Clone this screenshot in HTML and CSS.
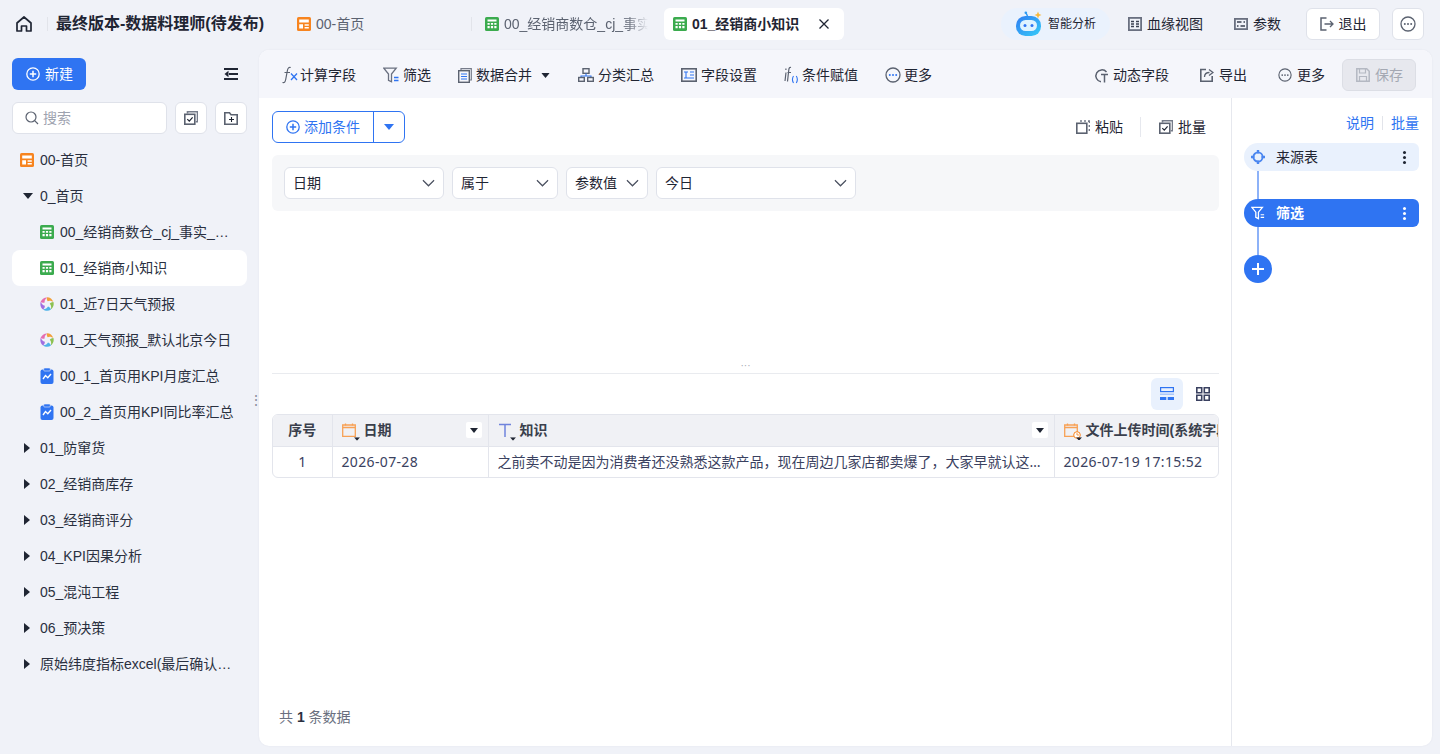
FILE: index.html
```html
<!DOCTYPE html>
<html lang="zh-CN">
<head>
<meta charset="utf-8">
<title>最终版本-数据料理师(待发布)</title>
<link rel="stylesheet" href="styles.css">
</head>
<body>
<svg class="defs" width="0" height="0">
  <defs>
    <linearGradient id="g-bot" x1="0" y1="0" x2="1" y2="1"><stop offset="0" stop-color="#2f7cf2"/><stop offset="1" stop-color="#36cdf8"/></linearGradient>
    <symbol id="i-sheet" viewBox="0 0 14 14"><rect width="14" height="14" rx="1.6" fill="#3bab4e"/><rect x="2.500" y="2.500" width="9" height="2" fill="#fff"/><path d="M2.500 6h2.200v1.800H2.500zM5.900 6h2.200v1.800H5.900zM9.300 6h2.200v1.800H9.300zM2.500 9h2.200v2.200H2.500zM5.900 9h2.200v2.200H5.900zM9.300 9h2.200v2.200H9.300z" fill="#fff"/></symbol>
    <symbol id="i-dash" viewBox="0 0 14 14"><rect width="14" height="14" rx="1.6" fill="#f7841f"/><path d="M2.200 2.500h9.600v3H2.200zM2.200 7.200h3.800v4.300H2.200zM7.600 7.200h4.200v1.600H7.600zM7.600 10h4.200v1.500H7.600z" fill="#fff"/></symbol>
    <symbol id="i-swirl" viewBox="0 0 14 14">
      <path d="M7 .3C10 .3 12.500 2.200 13.400 5.300C11.800 3.800 9.500 3.300 7.700 4.300C6.800 3 6.500 1.500 7 .3z" fill="#f2a03a"/>
      <path d="M7 .3C10 .3 12.500 2.200 13.400 5.300C11.800 3.800 9.500 3.300 7.700 4.300C6.800 3 6.500 1.500 7 .3z" fill="#8cc152" transform="rotate(72 7 7)"/>
      <path d="M7 .3C10 .3 12.500 2.200 13.400 5.300C11.800 3.800 9.500 3.300 7.700 4.300C6.800 3 6.500 1.500 7 .3z" fill="#4fb3e8" transform="rotate(144 7 7)"/>
      <path d="M7 .3C10 .3 12.500 2.200 13.400 5.300C11.800 3.800 9.500 3.300 7.700 4.300C6.800 3 6.500 1.500 7 .3z" fill="#a06fe0" transform="rotate(216 7 7)"/>
      <path d="M7 .3C10 .3 12.500 2.200 13.400 5.300C11.800 3.800 9.500 3.300 7.700 4.300C6.800 3 6.500 1.500 7 .3z" fill="#e56db1" transform="rotate(288 7 7)"/>
    </symbol>
    <symbol id="i-kpi" viewBox="0 0 13 16"><rect y="1.500" width="13" height="14.500" rx="2" fill="#2f74f2"/><rect x="3.200" width="6.600" height="3" rx="1" fill="#2f74f2" stroke="#f0f2f8" stroke-width=".6"/><path d="M2.500 11l2.500-3.500 2.300 2.300 3.200-3.800" fill="none" stroke="#fff" stroke-width="1.400"/></symbol>
    <symbol id="i-more" viewBox="0 0 16 16"><circle cx="8" cy="8" r="7" fill="none" stroke="#5b6270" stroke-width="1.300"/><circle cx="4.800" cy="8" r="1" fill="#5b6270"/><circle cx="8" cy="8" r="1" fill="#5b6270"/><circle cx="11.200" cy="8" r="1" fill="#5b6270"/></symbol>
    <symbol id="i-morebl" viewBox="0 0 16 16"><circle cx="8" cy="8" r="7" fill="none" stroke="#5b6270" stroke-width="1.300"/><circle cx="4.800" cy="8" r="1" fill="#2f74f2"/><circle cx="8" cy="8" r="1" fill="#2f74f2"/><circle cx="11.200" cy="8" r="1" fill="#2f74f2"/></symbol>
    <symbol id="i-batch" viewBox="0 0 14 14"><path d="M3.500 2.500V.8h10v10h-1.700" fill="none" stroke="#767c8a" stroke-width="1.600"/><rect x=".8" y="3.300" width="10" height="9.900" fill="none" stroke="#5b6270" stroke-width="1.600"/><path d="M3.300 8.200l2 2 3.300-3.800" fill="none" stroke="#1f2533" stroke-width="1.200"/></symbol>
    <symbol id="i-filter" viewBox="0 0 16 16"><path d="M.8 1.200h12.400L8.500 7v7.800l-3-1.500V7z" fill="none" stroke="#6a7080" stroke-width="1.300"/><path d="M11 10.500h4.500M11 13.500h4.500" stroke="#2f74f2" stroke-width="1.300"/></symbol>
    <symbol id="i-caret" viewBox="0 0 10 6"><path d="M0 0h10L5 6z" fill="currentColor"/></symbol>
    <symbol id="i-chev" viewBox="0 0 14 8"><path d="M1 1l6 6 6-6" fill="none" stroke="#4b5160" stroke-width="1.300"/></symbol>
    <symbol id="i-plus" viewBox="0 0 14 14"><circle cx="7" cy="7" r="6.200" fill="none" stroke="currentColor" stroke-width="1.300"/><path d="M7 3.800v6.400M3.800 7h6.400" stroke="currentColor" stroke-width="1.500"/></symbol>
    <symbol id="i-cal" viewBox="0 0 14 14"><path d="M.7 2h12.600v11.300H.7z" fill="none" stroke="#f7a155" stroke-width="1.300"/><path d="M.7 4.500h12.600M3.500.5v2M10.500.5v2" stroke="#f7a155" stroke-width="1.300"/></symbol>
  </defs>
</svg>

<header class="topbar">
  <svg class="ic-home" width="16" height="16" viewBox="0 0 16 16"><path d="M1 7L8 1l7 6v8h-4.500v-5h-5v5H1z" fill="none" stroke="#1f2533" stroke-width="1.700" stroke-linejoin="round"/></svg>
  <span class="vbar vbar-title"></span>
  <h1 class="title">最终版本-数据料理师(待发布)</h1>
  <div class="tab tab-first"><svg class="ic14"><use href="#i-dash"/></svg><span>00-首页</span></div>
  <span class="vbar vbar-tab"></span>
  <div class="tab tab-second"><svg class="ic14"><use href="#i-sheet"/></svg><span class="tab-fade">00_经销商数仓_cj_事实表</span></div>
  <div class="tab tab-active"><svg class="ic14"><use href="#i-sheet"/></svg><span class="tab-name">01_经销商小知识</span>
    <svg class="tab-x" width="10" height="10" viewBox="0 0 10 10"><path d="M.5.5l9 9M9.500.5l-9 9" stroke="#1f2533" stroke-width="1.300"/></svg></div>
  <div class="top-right">
    <div class="ai-pill">
      <svg width="27" height="27" viewBox="0 0 27 27"><path d="M12.500 6L11 3" stroke="#2f9bf2" stroke-width="1.500"/><circle cx="10.800" cy="2.800" r="1.300" fill="#2f9bf2"/><path d="M23 1.500l1 2.500 2.500 1-2.500 1-1 2.500-1-2.500-2.500-1 2.500-1z" fill="#f8b83a"/><rect x="1" y="6" width="25" height="20" rx="9.500" fill="url(#g-bot)"/><rect x="5" y="10" width="17" height="11" rx="5.500" fill="#dff3ff"/><circle cx="10" cy="15.500" r="1.500" fill="#2f74f2"/><circle cx="17" cy="15.500" r="1.500" fill="#2f74f2"/></svg>
      <span>智能分析</span>
    </div>
    <div class="top-link top-link-lineage"><svg width="14" height="14" viewBox="0 0 14 14"><rect x=".9" y=".9" width="12.200" height="12.200" fill="none" stroke="#6a7080" stroke-width="1.800"/><path d="M3 4.500h3M3 9.500h3M8 4.500h3M8 7h3M8 9.500h3M6 7H3" stroke="#3a4050" stroke-width="1.300"/></svg><span>血缘视图</span></div>
    <div class="top-link top-link-param"><svg width="14" height="14" viewBox="0 0 14 14"><rect x=".9" y="1.900" width="12.200" height="10.200" fill="none" stroke="#6a7080" stroke-width="1.800"/><path d="M3 5h4.500M9.500 5H11M3 9h1.500M6.500 9H11" stroke="#3a4050" stroke-width="1.300"/></svg><span>参数</span></div>
    <button class="btn-out"><svg width="14" height="14" viewBox="0 0 14 14"><path d="M6.500 1H1v12h5.500" fill="none" stroke="#5b6270" stroke-width="1.500"/><path d="M4.500 7h8.500M10 4l3 3-3 3" fill="none" stroke="#5b6270" stroke-width="1.300"/></svg><span>退出</span></button>
    <button class="btn-circle"><svg width="16" height="16"><use href="#i-more"/></svg></button>
  </div>
</header>

<div class="workspace">
  <aside class="sidebar">
    <div class="side-head">
      <button class="btn-new"><svg class="ic14"><use href="#i-plus"/></svg><span>新建</span></button>
      <svg class="collapse" width="14" height="12" viewBox="0 0 14 12"><path d="M0 1h14M5 6h9M0 11h14" stroke="#1f2533" stroke-width="1.800"/><path d="M4.500 2.800v6.400L.5 6z" fill="#1f2533"/></svg>
    </div>
    <div class="side-search">
      <div class="search-box"><svg width="14" height="14" viewBox="0 0 14 14"><circle cx="6" cy="6" r="5" fill="none" stroke="#5b6270" stroke-width="1.200"/><path d="M9.700 9.700L13 13" stroke="#5b6270" stroke-width="1.200"/></svg><span>搜索</span></div>
      <button class="icon-btn"><svg class="ic14"><use href="#i-batch"/></svg></button>
      <button class="icon-btn"><svg width="14" height="13" viewBox="0 0 14 13"><path d="M.8 12.200V.8h4.700l1.500 2h6.200v9.400z" fill="none" stroke="#5b6270" stroke-width="1.600"/><path d="M7.500 5v5M5 7.500h5" stroke="#1f2533" stroke-width="1.100"/></svg></button>
    </div>
    <ul class="tree">
      <li class="node lv1"><svg class="ic14"><use href="#i-dash"/></svg><span class="label">00-首页</span></li>
      <li class="node lv1"><svg class="arrow arrow-d" viewBox="0 0 10 6"><use href="#i-caret"/></svg><span class="label">0_首页</span></li>
      <li class="node lv2"><svg class="ic14"><use href="#i-sheet"/></svg><span class="label label-limit">00_经销商数仓_cj_事实_明细数据表</span></li>
      <li class="node lv2 active"><svg class="ic14"><use href="#i-sheet"/></svg><span class="label">01_经销商小知识</span></li>
      <li class="node lv2"><svg class="ic14"><use href="#i-swirl"/></svg><span class="label">01_近7日天气预报</span></li>
      <li class="node lv2"><svg class="ic14"><use href="#i-swirl"/></svg><span class="label">01_天气预报_默认北京今日</span></li>
      <li class="node lv2"><svg class="ic-kpi"><use href="#i-kpi"/></svg><span class="label">00_1_首页用KPI月度汇总</span></li>
      <li class="node lv2"><svg class="ic-kpi"><use href="#i-kpi"/></svg><span class="label">00_2_首页用KPI同比率汇总</span></li>
      <li class="node lv1"><svg class="arrow arrow-r" viewBox="0 0 10 6"><use href="#i-caret"/></svg><span class="label">01_防窜货</span></li>
      <li class="node lv1"><svg class="arrow arrow-r" viewBox="0 0 10 6"><use href="#i-caret"/></svg><span class="label">02_经销商库存</span></li>
      <li class="node lv1"><svg class="arrow arrow-r" viewBox="0 0 10 6"><use href="#i-caret"/></svg><span class="label">03_经销商评分</span></li>
      <li class="node lv1"><svg class="arrow arrow-r" viewBox="0 0 10 6"><use href="#i-caret"/></svg><span class="label">04_KPI因果分析</span></li>
      <li class="node lv1"><svg class="arrow arrow-r" viewBox="0 0 10 6"><use href="#i-caret"/></svg><span class="label">05_混沌工程</span></li>
      <li class="node lv1"><svg class="arrow arrow-r" viewBox="0 0 10 6"><use href="#i-caret"/></svg><span class="label">06_预决策</span></li>
      <li class="node lv1"><svg class="arrow arrow-r" viewBox="0 0 10 6"><use href="#i-caret"/></svg><span class="label">原始纬度指标excel(最后确认版本数据)</span></li>
    </ul>
    <span class="grip">⋮</span>
  </aside>

  <main class="card">
    <div class="toolbar">
      <div class="tool tool-fx"><svg width="16" height="18" viewBox="0 0 16 18"><path d="M.5 16.500c2 .5 2.700-.5 3.200-3l1.700-9c.5-2.500 1.500-3.500 3.300-3M2.500 6.500H8" fill="none" stroke="#5b6270" stroke-width="1.200"/><path d="M9 7.500l6 6.500M15 7.500l-6 6.500" stroke="#2f74f2" stroke-width="1.300"/></svg><span>计算字段</span></div>
      <div class="tool"><svg width="16" height="16"><use href="#i-filter"/></svg><span>筛选</span></div>
      <div class="tool tool-merge"><svg width="14" height="15" viewBox="0 0 14 15"><path d="M3 2V.7h10.300V12H12" fill="none" stroke="#767c8a" stroke-width="1.200"/><rect x=".7" y="2.700" width="10.600" height="11.600" fill="none" stroke="#5b6270" stroke-width="1.400"/><path d="M3 6h6M3 8.500h6M3 11h6" stroke="#2f74f2" stroke-width="1.100"/></svg><span>数据合并</span><svg class="tool-caret" viewBox="0 0 10 6"><use href="#i-caret"/></svg></div>
      <div class="tool"><svg width="16" height="14" viewBox="0 0 16 14"><rect x="5" y=".7" width="6" height="4.600" fill="none" stroke="#5b6270" stroke-width="1.400"/><path d="M8 5.500V8M3 10V8h10v2" fill="none" stroke="#2f74f2" stroke-width="1.100"/><rect x=".7" y="9.500" width="5.600" height="3.800" fill="none" stroke="#5b6270" stroke-width="1.400"/><rect x="9.700" y="9.500" width="5.600" height="3.800" fill="none" stroke="#5b6270" stroke-width="1.400"/></svg><span>分类汇总</span></div>
      <div class="tool"><svg width="16" height="14" viewBox="0 0 16 14"><rect x=".8" y=".8" width="14.400" height="12.400" fill="none" stroke="#5b6270" stroke-width="1.600"/><path d="M3 4h4M5 4v6M9 4h4M9 7h4M3 10h10" stroke="#2f74f2" stroke-width="1.100"/></svg><span>字段设置</span></div>
      <div class="tool"><svg width="14" height="18" viewBox="0 0 14 18"><path d="M2 6.500L1 15M1.900 2.500v1.500M7 1.500C5.500 1 5 2 4.700 4.500l-1.200 11M3.500 6.500H7" fill="none" stroke="#5b6270" stroke-width="1.200"/><path d="M9.500 10c-1.200 2-1.200 5 0 7M12.300 10c1.200 2 1.200 5 0 7" fill="none" stroke="#2f74f2" stroke-width="1.100"/></svg><span>条件赋值</span></div>
      <div class="tool tool-more"><svg width="16" height="16"><use href="#i-morebl"/></svg><span>更多</span></div>
      <div class="tool-right">
        <div class="tool"><svg width="14" height="15" viewBox="0 0 14 15"><path d="M12.500 4A6 6 0 1 0 7 13.800" fill="none" stroke="#5b6270" stroke-width="1.500"/><path d="M7 6.500h7M10.500 6.500v8" stroke="#5b6270" stroke-width="1.500"/></svg><span>动态字段</span></div>
        <div class="tool"><svg width="14" height="14" viewBox="0 0 14 14"><path d="M6 1.500H.8v11.700h11.400V8" fill="none" stroke="#5b6270" stroke-width="1.600"/><path d="M4.500 9c0-3 2-4.500 5-4.500M9 1.500L13 4.500 9 7.500" fill="none" stroke="#5b6270" stroke-width="1.300"/></svg><span>导出</span></div>
        <div class="tool"><svg width="14" height="14"><use href="#i-more"/></svg><span>更多</span></div>
        <button class="btn-save"><svg width="14" height="14" viewBox="0 0 14 14"><path d="M.8.800h9.900l2.500 2.500v9.900H.8z" fill="none" stroke="#b4b8c2" stroke-width="1.500"/><path d="M3.500 1v4h6V1M3.500 13V8.500h7V13" fill="none" stroke="#b4b8c2" stroke-width="1.200"/></svg><span>保存</span></button>
      </div>
    </div>

    <div class="body">
      <section class="editor">
        <div class="cond-row">
          <div class="split-btn">
            <div class="split-main"><svg class="ic14"><use href="#i-plus"/></svg><span>添加条件</span></div>
            <div class="split-drop"><svg class="split-caret" viewBox="0 0 10 6"><use href="#i-caret"/></svg></div>
          </div>
          <div class="cond-actions">
            <div class="cond-act"><svg width="14" height="14" viewBox="0 0 14 14"><rect x=".8" y="3.300" width="10" height="9.900" fill="none" stroke="#5b6270" stroke-width="1.600"/><path d="M4 1h2M8 1h2M12 1h1.500v2M13.300 5v2M13.300 9v2" stroke="#767c8a" stroke-width="1.400"/></svg><span>粘贴</span></div>
            <span class="cond-sep"></span>
            <div class="cond-act"><svg class="ic14"><use href="#i-batch"/></svg><span>批量</span></div>
          </div>
        </div>
        <div class="filter-box">
          <div class="sel sel-a"><span>日期</span><svg class="chev"><use href="#i-chev"/></svg></div>
          <div class="sel sel-b"><span>属于</span><svg class="chev"><use href="#i-chev"/></svg></div>
          <div class="sel sel-c"><span>参数值</span><svg class="chev"><use href="#i-chev"/></svg></div>
          <div class="sel sel-d"><span>今日</span><svg class="chev"><use href="#i-chev"/></svg></div>
        </div>
        <div class="resize"><span class="resize-dots">···</span></div>
        <div class="view-row">
          <span class="view-btn on"><svg width="14" height="14" viewBox="0 0 14 14"><rect x=".6" y=".6" width="12.800" height="4" fill="none" stroke="#2f74f2" stroke-width="1.200"/><rect y="6.500" width="14" height="1.500" fill="#a9c6fa"/><rect y="10" width="6.300" height="3" fill="#2f74f2"/><rect x="7.700" y="10" width="6.300" height="3" fill="#2f74f2"/></svg></span>
          <span class="view-btn"><svg width="14" height="14" viewBox="0 0 14 14"><path d="M.8.800h4.900v4.900H.8zM8.300.800h4.900v4.900H8.300zM.8 8.300h4.900v4.900H.8zM8.300 8.300h4.900v4.900H8.300z" fill="none" stroke="#3a4160" stroke-width="1.600"/></svg></span>
        </div>
        <div class="table-wrap">
          <table class="grid">
            <colgroup><col class="c-no"><col class="c-date"><col class="c-know"><col class="c-time"></colgroup>
            <thead>
              <tr>
                <th class="th-no">序号</th>
                <th><div class="th-in"><span class="ty"><svg class="ic14"><use href="#i-cal"/></svg><svg class="ty-caret" viewBox="0 0 10 6"><use href="#i-caret"/></svg></span><span>日期</span><span class="th-menu"><svg class="menu-caret" viewBox="0 0 10 6"><use href="#i-caret"/></svg></span></div></th>
                <th><div class="th-in"><span class="ty"><svg class="ic14" viewBox="0 0 14 14"><path d="M1 1.500h12M7 1.500V14" fill="none" stroke="#6f83dc" stroke-width="1.500"/></svg><svg class="ty-caret" viewBox="0 0 10 6"><use href="#i-caret"/></svg></span><span>知识</span><span class="th-menu"><svg class="menu-caret" viewBox="0 0 10 6"><use href="#i-caret"/></svg></span></div></th>
                <th class="th-last"><div class="th-in th-clip"><span class="ty"><svg class="ic14"><use href="#i-cal"/></svg><svg class="ty-clock" width="8" height="8" viewBox="0 0 8 8"><circle cx="4" cy="4" r="3.300" fill="#fff" stroke="#f7841f" stroke-width="1"/><path d="M4 2v2h2" fill="none" stroke="#f7841f" stroke-width=".8"/></svg><svg class="ty-caret" viewBox="0 0 10 6"><use href="#i-caret"/></svg></span><span class="th-nowrap">文件上传时间(系统字段)</span></div></th>
              </tr>
            </thead>
            <tbody>
              <tr>
                <td class="td-no">1</td>
                <td class="td-val">2026-07-28</td>
                <td><div class="ell">之前卖不动是因为消费者还没熟悉这款产品，现在周边几家店都卖爆了，大家早就认这个牌子了，不用担心销路</div></td>
                <td class="td-val">2026-07-19 17:15:52</td>
              </tr>
            </tbody>
          </table>
        </div>
        <div class="total">共 <b>1</b> 条数据</div>
      </section>

      <aside class="flow">
        <div class="flow-links"><a>说明</a><span class="flow-sep"></span><a>批量</a></div>
        <div class="step step-src">
          <svg width="14" height="14" viewBox="0 0 14 14"><circle cx="7" cy="7" r="4.600" fill="none" stroke="#4a86f0" stroke-width="1.800"/><path d="M5.800 0h2.400v3.500H5.800zM5.800 10.500h2.400V14H5.800zM0 5.800h3.500v2.400H0zM10.500 5.800H14v2.400h-3.500z" fill="#4a86f0"/></svg>
          <span class="step-name">来源表</span><span class="kebab"><i></i><i></i><i></i></span>
        </div>
        <span class="link"></span>
        <div class="step step-on">
          <svg width="14" height="14" viewBox="0 0 16 16"><path d="M1 1.500h12L8.500 7v7.500l-3-1.500V7z" fill="none" stroke="#fff" stroke-width="1.500"/><path d="M11 10h4M11 13h4" stroke="#fff" stroke-width="1.300"/></svg>
          <span class="step-name">筛选</span><span class="kebab"><i></i><i></i><i></i></span>
        </div>
        <span class="link"></span>
        <button class="step-add"><svg width="14" height="14" viewBox="0 0 14 14"><path d="M7 1v12M1 7h12" stroke="#fff" stroke-width="2"/></svg></button>
      </aside>
    </div>
  </main>
</div>
</body>
</html>
```
FILE: styles.css
```css
* { box-sizing: border-box; }
html, body { margin: 0; height: 100%; }
body {
  width: 1440px;
  height: 754px;
  overflow: hidden;
  background: #f0f2f8;
  color: #1f2533;
  font: 14px/20px "Liberation Sans", "Noto Sans CJK SC", sans-serif;
}
button { font: inherit; color: inherit; padding: 0; cursor: pointer; }
ul { list-style: none; margin: 0; padding: 0; }
svg { display: block; flex: none; }
.defs { position: absolute; }
.ic14 { width: 14px; height: 14px; }
.ic-kpi { width: 14px; height: 16px; }

/* top bar */
.topbar { display: flex; align-items: center; height: 50px; padding: 1px 16px 4px; }
.vbar { width: 1px; height: 14px; background: #e2e4ea; flex: none; }
.vbar-title { margin: 0 8px 0 15px; }
.title { margin: 0; font-size: 16px; font-weight: 700; color: #1f2533; white-space: nowrap; width: 208px; line-height: 22px; }
.tab { display: flex; align-items: center; gap: 5px; height: 32px; flex: none; }
.tab-first { margin-left: 33px; color: #5b6270; width: 174px; }
.tab-second { margin-left: 13px; color: #5b6270; width: 166px; padding-right: 0; }
.tab-fade {
  width: 144px;
  overflow: hidden;
  white-space: nowrap;
  -webkit-mask-image: linear-gradient(90deg, #000 85%, transparent);
  mask-image: linear-gradient(90deg, #000 85%, transparent);
}
.tab-active { margin-left: 13px; width: 180px; padding-left: 9px; background: #fff; border-radius: 6px; color: #1f2533; }
.tab-name { font-weight: 700; width: 107px; white-space: nowrap; }
.tab-x { margin-left: 15px; }
.top-right { display: flex; align-items: center; margin-left: auto; }
.ai-pill { display: flex; align-items: center; gap: 6px; width: 109px; height: 32px; padding-left: 14px; border-radius: 16px; background: #eaf2fd; font-size: 12px; color: #1f2533; }
.top-link { display: flex; align-items: center; gap: 5px; }
.top-link-lineage { margin-left: 18px; }
.top-link-param { margin-left: 31px; }
.btn-out { display: flex; align-items: center; justify-content: center; gap: 5px; width: 74px; height: 32px; margin-left: 25px; background: #fff; border: 1px solid #dfe2ea; border-radius: 6px; }
.btn-circle { display: flex; align-items: center; justify-content: center; width: 32px; height: 32px; margin-left: 12px; background: #fff; border: 1px solid #dfe2ea; border-radius: 6px; }

/* workspace */
.workspace { display: flex; height: 696px; }

/* sidebar */
.sidebar { position: relative; width: 259px; flex: none; padding: 8px 12px 0 12px; }
.side-head { display: flex; align-items: center; justify-content: space-between; height: 32px; padding-right: 9px; }
.btn-new { display: flex; align-items: center; gap: 5px; width: 74px; height: 32px; padding-left: 14px; border: 0; border-radius: 6px; background: #2f74f2; color: #fff; }
.side-search { display: flex; gap: 8px; margin-top: 12px; }
.search-box { display: flex; align-items: center; gap: 4px; width: 155px; height: 32px; padding-left: 12px; background: #fff; border: 1px solid #dfe2ea; border-radius: 6px; color: #9ea3af; }
.icon-btn { display: flex; align-items: center; justify-content: center; width: 32px; height: 32px; background: #fff; border: 1px solid #dfe2ea; border-radius: 6px; }
.tree { margin-top: 8px; }
.node { display: flex; align-items: center; height: 36px; border-radius: 8px; color: #2a3040; }
.lv1 { padding: 0 14px 0 8px; }
.lv2 { padding: 0 13px 0 28px; }
.lv1 .ic14, .lv2 .ic14, .lv2 .ic-kpi { margin-right: 6px; }
.arrow { width: 10px; height: 6px; margin: 0 8px 0 2px; color: #1f2533; }
.arrow-d { margin: 0 7px 0 3px; }
.arrow-r { transform: rotate(-90deg); }
.label { flex: 1; min-width: 0; overflow: hidden; white-space: nowrap; text-overflow: ellipsis; }
.label-limit { padding-right: 2px; }
.node.active { background: #fff; }
.grip { position: absolute; left: 249px; top: 340px; color: #8a8f9b; font-size: 14px; width: 10px; text-align: center; }

/* main card */
.card { display: flex; flex-direction: column; width: 1173px; height: 696px; background: #fff; border-radius: 10px; overflow: hidden; box-shadow: 0 0 2px rgba(60, 70, 100, .08); }
.toolbar { display: flex; align-items: center; flex: none; height: 48px; padding: 2px 16px 0 23px; gap: 27px; background: #f5f6fb; }
.tool { display: flex; align-items: center; gap: 4px; white-space: nowrap; color: #1f2533; }
.tool-fx { gap: 2px; }
.tool-more { gap: 3px; }
.tool-caret { width: 9px; height: 5px; margin: 0 1px 0 5px; color: #1f2533; }
.tool-right { display: flex; align-items: center; gap: 31px; margin-left: auto; }
.tool-right .tool { gap: 5px; }
.btn-save { display: flex; align-items: center; gap: 5px; width: 74px; height: 32px; margin-left: -14px; padding-left: 13px; background: #e7e8ee; border: 1px solid #dcdee5; border-radius: 6px; color: #a4a8b3; }

.body { display: flex; flex: 1; min-height: 0; }
.editor { display: flex; flex-direction: column; width: 973px; padding: 13px 12px 19px 13px; border-right: 1px solid #e6e8ee; }
.cond-row { display: flex; align-items: center; justify-content: space-between; height: 32px; flex: none; }
.split-btn { display: flex; width: 133px; height: 32px; border: 1px solid #2f74f2; border-radius: 6px; color: #2f74f2; }
.split-main { display: flex; align-items: center; gap: 4px; width: 101px; padding-left: 13px; border-right: 1px solid #2f74f2; }
.split-drop { flex: 1; display: flex; align-items: center; justify-content: center; }
.split-caret { width: 10px; height: 6px; }
.cond-actions { display: flex; align-items: center; padding: 0 13px 0 0; }
.cond-act { display: flex; align-items: center; gap: 5px; }
.cond-sep { width: 1px; height: 20px; margin: 0 18px 0 17px; background: #e6e8ee; }
.filter-box { display: flex; gap: 8px; flex: none; height: 56px; margin-top: 12px; padding: 12px; background: #f6f7f9; border-radius: 6px; }
.sel { display: flex; align-items: center; justify-content: space-between; height: 32px; padding: 0 8px; background: #fff; border: 1px solid #dfe2ea; border-radius: 6px; color: #1f2533; }
.chev { width: 13px; height: 8px; }
.sel-a { width: 160px; }
.sel-b { width: 106px; }
.sel-c { width: 82px; }
.sel-d { width: 200px; }
.resize { position: relative; flex: none; height: 163px; border-bottom: 1px solid #e9ebef; }
.resize-dots { position: absolute; left: 50%; bottom: 1px; transform: translateX(-50%); font-size: 10px; line-height: 12px; color: #a4a8b3; }
.view-row { display: flex; justify-content: flex-end; gap: 4px; flex: none; margin-top: 4px; }
.view-btn { display: flex; align-items: center; justify-content: center; width: 32px; height: 32px; border-radius: 6px; }
.view-btn.on { background: #e9f1fd; }
.table-wrap { flex: none; margin-top: 4px; height: 64px; border: 1px solid #e3e5ec; border-radius: 6px; overflow: hidden; }
.grid { width: 945px; table-layout: fixed; border-collapse: collapse; color: #3a4160; }
.c-no { width: 59px; }
.c-date { width: 156px; }
.c-know { width: 566px; }
.c-time { width: 164px; }
.grid th, .grid td { padding: 0 9px; border-left: 1px solid #e3e5ec; text-align: left; overflow: hidden; }
.grid th:first-child, .grid td:first-child { border-left: 0; text-align: center; }
.grid th { height: 31px; background: #f0f1f5; border-bottom: 1px solid #e3e5ec; font-weight: 700; color: #3a3f4c; }
.grid .th-last { padding-right: 0; }
.grid td { height: 31px; font-family: "Noto Sans", "Noto Sans CJK SC", sans-serif; }
.grid .td-val { white-space: nowrap; letter-spacing: .35px; }
.th-in { display: flex; align-items: center; gap: 8px; }
.th-clip { overflow: hidden; }
.th-nowrap { white-space: nowrap; }
.th-menu { display: flex; align-items: center; justify-content: center; width: 16px; height: 16px; margin-left: auto; margin-right: -3px; background: #fff; border-radius: 2px; }
.menu-caret { width: 8px; height: 5px; color: #1f2533; }
.ty { position: relative; display: block; width: 14px; height: 14px; flex: none; }
.ty-caret { position: absolute; right: -4px; bottom: -4px; width: 6px; height: 4px; color: #1f2533; }
.ty-clock { position: absolute; right: -3px; bottom: -2px; }
.ell { white-space: nowrap; overflow: hidden; text-overflow: ellipsis; }
.total { margin-top: auto; padding-left: 7px; color: #6a7080; }
.total b { color: #2a3040; }

/* flow */
.flow { display: flex; flex-direction: column; flex: 1; padding: 15px 13px 0 12px; }
.flow-links { display: flex; align-items: center; justify-content: flex-end; height: 20px; margin-bottom: 10px; color: #2f74f2; }
.flow-sep { width: 1px; height: 14px; margin: 0 8px; background: #e2e4ea; }
.step { display: flex; align-items: center; height: 28px; padding: 0 13px 0 7px; border-radius: 14px 6px 6px 14px; }
.step-src { background: #e9f1fd; color: #1f2533; }
.step-on { background: #2f74f2; color: #fff; font-weight: 700; }
.step-name { flex: 1; margin-left: 11px; }
.kebab { display: flex; flex-direction: column; gap: 2px; }
.kebab i { display: block; width: 3px; height: 3px; border-radius: 50%; background: currentColor; }
.link { display: block; width: 2px; height: 28px; margin-left: 13px; background: #8db2f8; }
.step-add { display: flex; align-items: center; justify-content: center; width: 28px; height: 28px; border: 0; border-radius: 50%; background: #2f74f2; }
```
